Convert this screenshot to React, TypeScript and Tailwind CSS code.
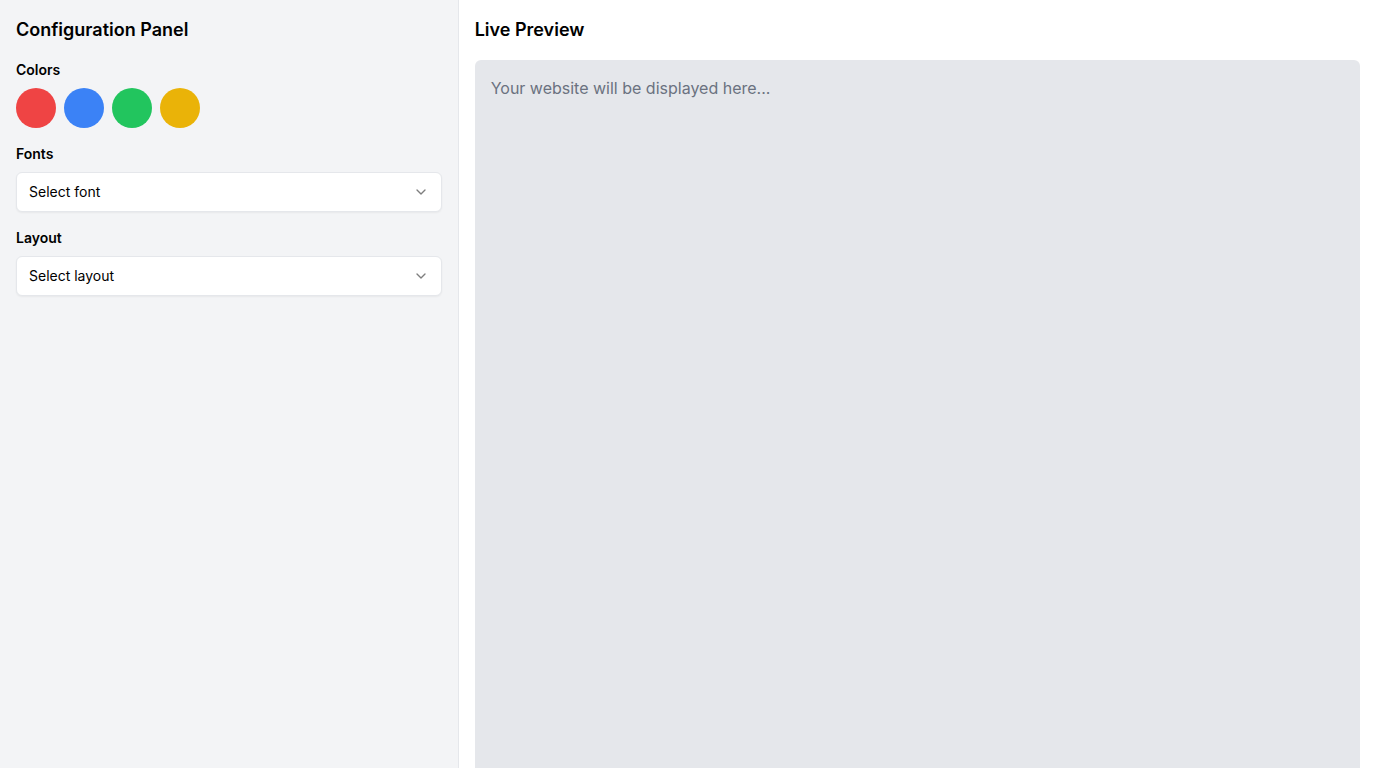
import React from "react";
import { ChevronDown } from "lucide-react";

function SelectBox({ placeholder }: { placeholder: string }) {
  return (
    <button
      type="button"
      className="flex h-10 w-full items-center justify-between rounded-md border border-[#e5e7eb] bg-white px-3 text-sm text-black shadow-xs"
    >
      <span>{placeholder}</span>
      <ChevronDown className="h-4 w-4 opacity-50" />
    </button>
  );
}

export default function App() {
  const colors = ["bg-[#ef4444]", "bg-[#3b82f6]", "bg-[#22c55e]", "bg-[#eab308]"];
  return (
    <div
      className="flex h-screen w-full overflow-hidden bg-white text-black"
      style={{ fontFamily: "Inter, 'Noto Sans', sans-serif" }}
    >
      <aside className="w-1/3 shrink-0 border-r border-[#e5e7eb] bg-[#f3f4f6] p-4">
        <h2 className="mb-4 text-lg font-semibold leading-7">Configuration Panel</h2>
        <div className="mb-4">
          <h3 className="mb-2 text-sm font-semibold leading-5">Colors</h3>
          <div className="flex gap-2">
            {colors.map((c) => (
              <div key={c} className={`h-10 w-10 rounded-full ${c}`} />
            ))}
          </div>
        </div>
        <div className="mb-4">
          <h3 className="mb-2 text-sm font-semibold leading-5">Fonts</h3>
          <SelectBox placeholder="Select font" />
        </div>
        <div className="mb-4">
          <h3 className="mb-2 text-sm font-semibold leading-5">Layout</h3>
          <SelectBox placeholder="Select layout" />
        </div>
      </aside>
      <main className="flex flex-1 flex-col px-4 pt-4">
        <h2 className="mb-4 text-lg font-semibold leading-7">Live Preview</h2>
        <div className="flex-1 rounded-t-md bg-[#e5e7eb] p-4">
          <p className="text-base text-[#6b7280]">Your website will be displayed here...</p>
        </div>
      </main>
    </div>
  );
}
